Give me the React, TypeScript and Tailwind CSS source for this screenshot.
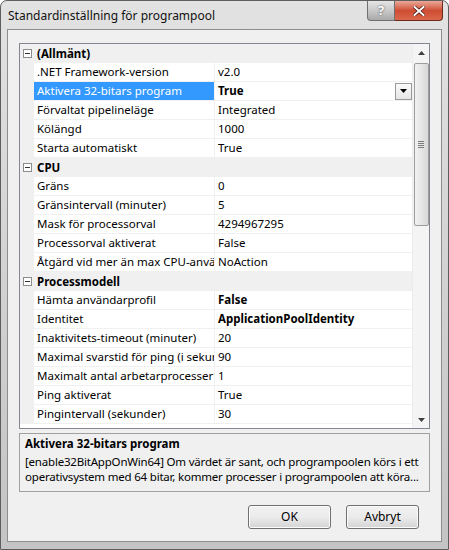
type Prop = { name: string; value: string; bold?: boolean; selected?: boolean }
type Category = { title: string; props: Prop[] }

const categories: Category[] = [
  {
    title: '(Allmänt)',
    props: [
      { name: '.NET Framework-version', value: 'v2.0' },
      { name: 'Aktivera 32-bitars program', value: 'True', bold: true, selected: true },
      { name: 'Förvaltat pipelineläge', value: 'Integrated' },
      { name: 'Kölängd', value: '1000' },
      { name: 'Starta automatiskt', value: 'True' },
    ],
  },
  {
    title: 'CPU',
    props: [
      { name: 'Gräns', value: '0' },
      { name: 'Gränsintervall (minuter)', value: '5' },
      { name: 'Mask för processorval', value: '4294967295' },
      { name: 'Processorval aktiverat', value: 'False' },
      { name: 'Åtgärd vid mer än max CPU-användning', value: 'NoAction' },
    ],
  },
  {
    title: 'Processmodell',
    props: [
      { name: 'Hämta användarprofil', value: 'False', bold: true },
      { name: 'Identitet', value: 'ApplicationPoolIdentity', bold: true },
      { name: 'Inaktivitets-timeout (minuter)', value: '20' },
      { name: 'Maximal svarstid för ping (i sekunder)', value: '90' },
      { name: 'Maximalt antal arbetarprocesser', value: '1' },
      { name: 'Ping aktiverat', value: 'True' },
      { name: 'Pingintervall (sekunder)', value: '30' },
    ],
  },
]

function Collapse() {
  return (
    <div className="w-[9px] h-[9px] border border-[#8c8c8c] bg-white flex items-center justify-center">
      <div className="w-[5px] h-[1px] bg-[#333]" />
    </div>
  )
}

function CategoryRow({ title }: { title: string }) {
  return (
    <div className="flex h-[19px] shrink-0 bg-[#f0f0f0]">
      <div className="w-[14px] flex items-center justify-end pr-[2px]">
        <Collapse />
      </div>
      <div className="flex-1 pl-[3px] flex items-center font-bold">{title}</div>
    </div>
  )
}

function PropRow({ p }: { p: Prop }) {
  return (
    <div className="flex h-[19px] shrink-0">
      <div className="w-[14px] bg-[#f0f0f0]" />
      <div className="flex-1 flex border-b border-[#f0f0f0]">
        <div
          className={`w-[181px] shrink-0 overflow-hidden whitespace-nowrap pl-[3px] flex items-center border-r border-[#f0f0f0] ${
            p.selected ? 'bg-[#3399ff] text-white' : ''
          }`}
        >
          {p.name}
        </div>
        <div className={`flex-1 flex items-center pl-[3px] whitespace-nowrap ${p.bold ? 'font-bold' : ''}`}>
          <span className="flex-1">{p.value}</span>
          {p.selected && (
            <div className="w-[17px] h-[17px] border border-[#9a9a9a] bg-gradient-to-b from-[#fafafa] to-[#e6e6e6] flex items-center justify-center">
              <svg width="7" height="4" viewBox="0 0 7 4">
                <path d="M0 0h7L3.5 4z" fill="#000" />
              </svg>
            </div>
          )}
        </div>
      </div>
    </div>
  )
}

function Scrollbar() {
  return (
    <div className="w-[17px] bg-[#f4f4f4] border-l border-[#ececec] flex flex-col items-center">
      <div className="h-[17px] w-full flex items-center justify-center">
        <svg width="7" height="4" viewBox="0 0 7 4">
          <path d="M3.5 0L7 4H0z" fill="#404040" />
        </svg>
      </div>
      <div className="mt-[2px] h-[163px] w-[15px] rounded-[2px] border border-[#9c9c9c] bg-gradient-to-r from-[#f2f2f2] to-[#d8d8d8] flex flex-col items-center justify-center gap-[1px]">
        <div className="w-[6px] h-[1px] bg-[#7d7d7d]" />
        <div className="w-[6px] h-[1px] bg-[#7d7d7d]" />
        <div className="w-[6px] h-[1px] bg-[#7d7d7d]" />
        <div className="w-[6px] h-[1px] bg-[#7d7d7d]" />
      </div>
      <div className="flex-1" />
      <div className="h-[17px] w-full flex items-center justify-center">
        <svg width="7" height="4" viewBox="0 0 7 4">
          <path d="M0 0h7L3.5 4z" fill="#404040" />
        </svg>
      </div>
    </div>
  )
}

function Button({ label, width }: { label: string; width: string }) {
  return (
    <button
      className={`${width} h-[24px] rounded-[3px] border border-[#707070] bg-gradient-to-b from-[#f2f2f2] via-[#ebebeb] to-[#d4d4d4] text-[12px] text-black shadow-[inset_0_0_0_1px_#fcfcfc]`}
    >
      {label}
    </button>
  )
}

export default function App() {
  return (
    <div className="w-[449px] h-[550px] flex flex-col rounded-t-[7px] border border-[#5e5e5e] bg-gradient-to-b from-[#e2e2e2] via-[#d2d2d2] to-[#c4c4c4] font-['Segoe_UI','Noto_Sans',sans-serif] text-[11.5px] text-black overflow-hidden">
      <div className="h-[28px] shrink-0 flex items-start">
        <div className="flex-1 pl-[7px] pt-[6px] text-[12px] text-[#111]">Standardinställning för programpool</div>
        <div className="flex mr-[5px]">
          <div className="w-[28px] h-[20px] rounded-bl-[4px] border border-t-0 border-[#6f6f6f] bg-gradient-to-b from-[#e6e6e6] via-[#c9c9c9] to-[#a9a9a9] flex items-center justify-center text-white font-bold text-[13px] [text-shadow:0_0_2px_#333]">
            ?
          </div>
          <div className="w-[48px] h-[20px] rounded-br-[4px] border border-t-0 border-l-0 border-[#6b2a1c] bg-gradient-to-b from-[#e9a99a] via-[#cf4d33] to-[#d9674b] flex items-center justify-center">
            <svg width="12" height="10" viewBox="0 0 12 10">
              <path d="M1.5 1l9 8M10.5 1l-9 8" stroke="#4a1a10" strokeWidth="3.4" strokeLinecap="square" />
              <path d="M1.5 1l9 8M10.5 1l-9 8" stroke="#fff" strokeWidth="2" strokeLinecap="square" />
            </svg>
          </div>
        </div>
      </div>

      <div className="flex-1 mx-[6px] mb-[7px] border border-[#8d8d8d] bg-[#f0f0f0] flex flex-col px-[11px] pt-[13px]">
        <div className="h-[386px] shrink-0 border border-[#828790] bg-white flex overflow-hidden">
          <div className="flex-1 flex flex-col overflow-hidden">
            {categories.map((c) => (
              <div key={c.title} className="flex flex-col">
                <CategoryRow title={c.title} />
                {c.props.map((p) => (
                  <PropRow key={p.name} p={p} />
                ))}
              </div>
            ))}
          </div>
          <Scrollbar />
        </div>

        <div className="mt-[4px] h-[59px] shrink-0 border border-[#a0a0a0] px-[5px] pt-[2px] leading-[15px] whitespace-nowrap overflow-hidden">
          <div className="font-bold mb-[3px]">Aktivera 32-bitars program</div>
          <div className="tracking-[-0.2px]">[enable32BitAppOnWin64] Om värdet är sant, och programpoolen körs i ett</div>
          <div className="tracking-[-0.2px]">operativsystem med 64 bitar, kommer processer i programpoolen att köra...</div>
        </div>

        <div className="mt-[13px] flex justify-end gap-[15px] pr-[11px]">
          <Button label="OK" width="w-[83px]" />
          <Button label="Avbryt" width="w-[73px]" />
        </div>
      </div>
    </div>
  )
}
